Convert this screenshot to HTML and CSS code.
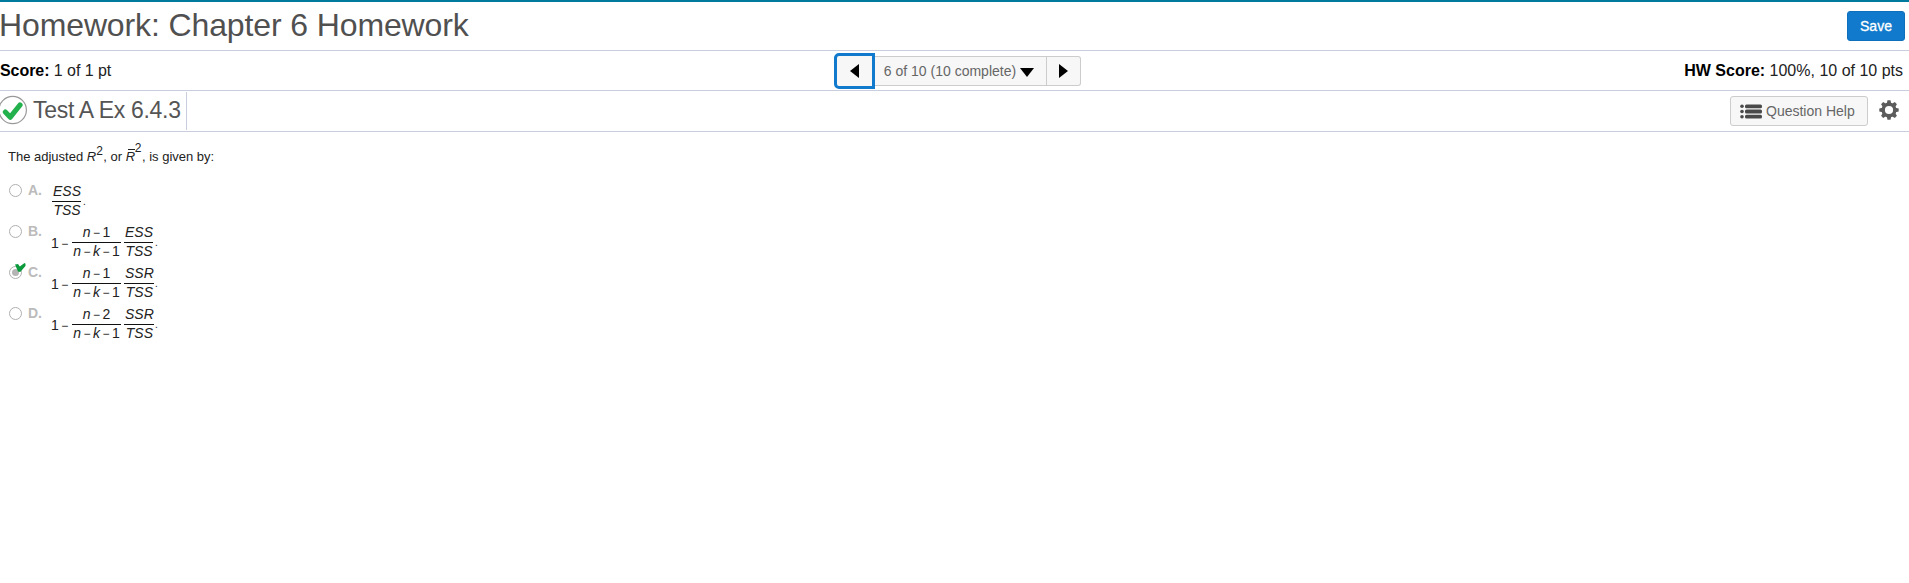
FILE: index.html
```html
<!DOCTYPE html>
<html lang="en">
<head>
<meta charset="utf-8">
<title>Homework: Chapter 6 Homework</title>
<link rel="stylesheet" href="styles.css">
</head>
<body>
<header class="title-bar">
  <h1>Homework: Chapter 6 Homework</h1>
  <button class="save">Save</button>
</header>
<section class="score-bar">
  <p class="score"><b>Score:</b> 1 of 1 pt</p>
  <nav class="pager">
    <button class="prev" aria-label="Previous"><svg width="9" height="14" viewBox="0 0 9 14"><path d="M9 0v14L0 7z"/></svg></button>
    <button class="current"><span>6 of 10 (10 complete)</span><svg width="14" height="9" viewBox="0 0 14 9"><path d="M0 0h14L7 9z"/></svg></button>
    <button class="next" aria-label="Next"><svg width="9" height="14" viewBox="0 0 9 14"><path d="M0 0v14L9 7z"/></svg></button>
  </nav>
  <p class="hw-score"><b>HW Score:</b> 100%, 10 of 10 pts</p>
</section>
<section class="question-bar">
  <div class="question-name">
    <svg class="correct" width="28" height="30" viewBox="0 0 28 30"><circle cx="12.7" cy="15" r="13.7" fill="#fff" stroke="#999" stroke-width="1.2"/><path d="M5.3 17l5 5.2L20 10" fill="none" stroke="#22b14c" stroke-width="5.2" stroke-linecap="round" stroke-linejoin="round"/></svg>
    <h2>Test A Ex 6.4.3</h2>
  </div>
  <div class="tools">
    <button class="help"><svg width="22" height="15" viewBox="0 0 22 15" fill="#4a4a4a"><circle cx="2" cy="2.2" r="1.8"/><circle cx="2" cy="7.5" r="1.8"/><circle cx="2" cy="12.8" r="1.8"/><rect x="5" y="0.5" width="17" height="3.8" rx="1.5"/><rect x="5" y="5.6" width="17" height="3.8" rx="1.5"/><rect x="5" y="10.7" width="17" height="3.8" rx="1.5"/></svg><span>Question Help</span></button>
    <svg class="gear" width="20" height="20" viewBox="-10 -10 20 20"><circle r="5.8" fill="none" stroke="#5c5c5c" stroke-width="3.4"/><g fill="#5c5c5c"><path id="t" d="M-2.2-6.5l.7-3.2h3l.7 3.2z"/><use href="#t" transform="rotate(45)"/><use href="#t" transform="rotate(90)"/><use href="#t" transform="rotate(135)"/><use href="#t" transform="rotate(180)"/><use href="#t" transform="rotate(225)"/><use href="#t" transform="rotate(270)"/><use href="#t" transform="rotate(315)"/></g></svg>
  </div>
</section>
<main>
  <p class="prompt"><span>The adjusted <i>R</i><sup>2</sup></span><span class="comma">, or <i class="bar">R</i><sup class="high">2</sup></span><span class="comma">, is given by:</span></p>
  <ol class="answers">
    <li><span class="radio"></span><b>A.</b><span class="math"><span class="frac total"><i>ESS</i><i>TSS</i></span><span class="dot">.</span></span></li>
    <li><span class="radio"></span><b>B.</b><span class="math"><span class="lead">1<span class="op">−</span></span><span class="frac wide"><span><i>n</i><span class="op">−</span>1</span><span><i>n</i><span class="op">−</span><i>k</i><span class="op">−</span>1</span></span><span class="frac total"><i>ESS</i><i>TSS</i></span><span class="dot">.</span></span></li>
    <li><span class="radio checked"><svg width="11" height="10" viewBox="0 0 11 10"><path d="M0 1.5l3-.5 1.8 2.6L9.5 0 10.5.8v2.2L5.2 9 3 8.5z" fill="#0a9a3c"/></svg></span><b>C.</b><span class="math"><span class="lead">1<span class="op">−</span></span><span class="frac wide"><span><i>n</i><span class="op">−</span>1</span><span><i>n</i><span class="op">−</span><i>k</i><span class="op">−</span>1</span></span><span class="frac total"><i>SSR</i><i>TSS</i></span><span class="dot">.</span></span></li>
    <li><span class="radio"></span><b>D.</b><span class="math"><span class="lead">1<span class="op">−</span></span><span class="frac wide"><span><i>n</i><span class="op">−</span>2</span><span><i>n</i><span class="op">−</span><i>k</i><span class="op">−</span>1</span></span><span class="frac total"><i>SSR</i><i>TSS</i></span><span class="dot">.</span></span></li>
  </ol>
</main>
</body>
</html>
```
FILE: styles.css
```css
* { box-sizing: border-box; }
body { margin: 0; background: #fff; color: #222; font-family: "Liberation Sans", Arial, sans-serif; }
h1, h2, p, ol { margin: 0; padding: 0; font-weight: normal; }
button { font-family: inherit; margin: 0; padding: 0; display: flex; align-items: center; }
svg { display: block; flex: none; }

.title-bar { height: 51px; border-top: 2px solid #007a9c; border-bottom: 1px solid #c9cede; display: flex; justify-content: space-between; padding-right: 4px; }
h1 { margin-left: -1px; font-size: 32px; letter-spacing: -.12px; line-height: 36px; padding-top: 5px; color: #505050; white-space: nowrap; }
.save { width: 58px; height: 30px; margin-top: 9px; justify-content: center; background: #117acc; border: 1px solid #0e6fbd; border-radius: 3px; color: #fff; font-size: 14px; -webkit-text-stroke: .3px #fff; }

.score-bar { height: 40px; border-bottom: 1px solid #c9cede; display: grid; grid-template-columns: 834px 247px 1fr; font-size: 16px; line-height: 18px; }
.score, .hw-score { padding-top: 11px; white-space: nowrap; }
.score { letter-spacing: -.06px; }
.score b, .hw-score b { color: #000; }
.hw-score { text-align: right; padding-right: 6px; }
.pager { display: flex; align-items: center; padding-top: 1px; }
.pager button { height: 30px; background: #f7f7f7; border: 1px solid #ccc; justify-content: center; color: #666; font-size: 14px; }
.pager .prev { width: 41px; height: 36px; border: 3px solid #117acc; border-radius: 5px 0 0 5px; }
.pager .current { width: 172px; padding-right: 3px; border-left: 0; gap: 4px; }
.pager .current span { white-space: nowrap; }
.pager .current svg { margin-top: 2px; }
.pager .next { width: 34px; border-left: 0; border-radius: 0 3px 3px 0; }

.question-bar { height: 41px; border-bottom: 1px solid #c9cede; display: flex; justify-content: space-between; }
.question-name { display: flex; width: 187px; height: 38px; margin-top: 1px; border-right: 1px solid #c9cede; }
.correct { margin-top: 3px; }
h2 { font-size: 23px; letter-spacing: -.3px; line-height: 26px; padding: 5px 0 0 5px; color: #555; white-space: nowrap; }
.tools { display: flex; align-items: center; gap: 11px; padding-right: 10px; }
.help { width: 138px; height: 30px; padding-left: 9px; gap: 4px; background: #f7f7f7; border: 1px solid #ccc; border-radius: 3px; color: #666; font-size: 14px; white-space: nowrap; }
.gear { margin-bottom: 2px; }

main { padding: 13px 8px; font-size: 14px; }
.prompt { display: flex; height: 35px; font-size: 13px; line-height: 23px; white-space: pre; }
sup { font-size: 12px; line-height: 0; vertical-align: 6px; }
sup.high { vertical-align: 9px; }
.comma { padding-left: .5px; }
.bar { display: inline-block; width: 9px; line-height: 11px; background: linear-gradient(#222, #222) 2px 0 / 7px 1px no-repeat; padding-top: 2px; }

.answers { list-style: none; }
.answers li { display: grid; grid-template-columns: 20px 24px 1fr; height: 41px; }
.answers li > b { line-height: 16px; padding-top: 2px; color: #bbb; }
.radio { width: 13px; height: 13px; margin: 4px 0 0 1px; border: 1px solid #b0b0b0; border-radius: 50%; position: relative; }
.checked::before { content: ""; position: absolute; inset: 2px; border-radius: 50%; background: #b5b5b5; }
.checked svg { position: absolute; left: 5px; top: -4px; }
.math { display: flex; padding-top: 3px; white-space: nowrap; }
.lead { width: 21px; margin-left: -1px; padding-top: 11px; line-height: 16px; }
.op { font-size: 12px; margin: 0 2.5px; line-height: 0; }
.frac { display: grid; grid-template-rows: 18px 18px; text-align: center; line-height: 16px; }
.frac > :last-child { border-top: 1px solid #111; }
.frac.wide { width: 49px; margin-right: 3px; }
.frac.total { width: 29px; }
.frac.total > i { padding-left: 1px; }
.dot { padding: 11px 0 0 2px; font-size: 10px; line-height: 16px; }
```
